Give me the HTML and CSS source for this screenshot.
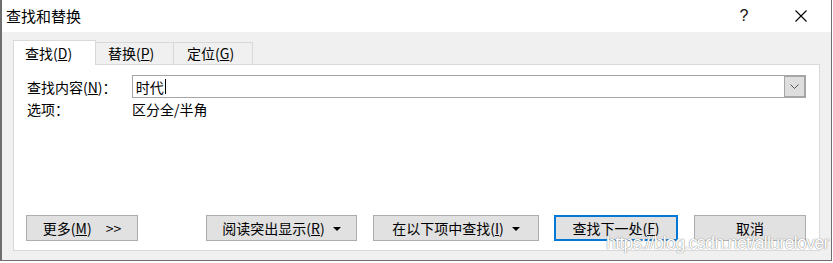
FILE: index.html
```html
<!DOCTYPE html>
<html lang="zh-CN">
<head>
    <meta charset="UTF-8">
    <title>查找和替换</title>
    <link rel="stylesheet" href="styles.css">
</head>
<body>
    <div class="dialog">
        <div class="titlebar">
            <span class="title">查找和替换</span>
            <div class="controls">
                <span class="ctl help">?</span>
                <span class="ctl close">
                    <svg width="12" height="12" viewBox="0 0 12 12"><path d="M0.5 0.5 L11.5 11.5 M11.5 0.5 L0.5 11.5" stroke="#000" stroke-width="1.1" fill="none"/></svg>
                </span>
            </div>
        </div>

        <div class="body">
            <div class="tabs">
                <div class="tab active">查找(<u>D</u>)</div>
                <div class="tab">替换(<u>P</u>)</div>
                <div class="tab last">定位(<u>G</u>)</div>
            </div>

            <div class="panel">
                <div class="row">
                    <span class="label">查找内容(<u>N</u>)：</span>
                    <div class="combo">
                        <span class="value">时代</span><span class="caret"></span>
                        <span class="drop">
                            <svg width="9" height="5" viewBox="0 0 9 5"><path d="M0.5 0.5 L4.5 4.5 L8.5 0.5" stroke="#555" stroke-width="1" fill="none"/></svg>
                        </span>
                    </div>
                </div>
                <div class="row options">
                    <span class="label">选项：</span>
                    <span>区分全/半角</span>
                </div>

                <div class="buttons">
                    <button type="button" class="btn more"><span>更多(<u>M</u>)</span><span>&gt;&gt;</span></button>
                    <button type="button" class="btn read"><span>阅读突出显示(<u>R</u>)</span><svg class="arrow" width="8" height="4" viewBox="0 0 8 4"><path d="M0 0 H8 L4 4 Z" fill="#000"/></svg></button>
                    <button type="button" class="btn within"><span>在以下项中查找(<u>I</u>)</span><svg class="arrow" width="8" height="4" viewBox="0 0 8 4"><path d="M0 0 H8 L4 4 Z" fill="#000"/></svg></button>
                    <button type="button" class="btn next"><span>查找下一处(<u>F</u>)</span></button>
                    <button type="button" class="btn cancel"><span>取消</span></button>
                </div>
            </div>
        </div>

        <div class="watermark">https://blog.csdn.net/allurelover</div>
    </div>
</body>
</html>
```

FILE: styles.css
```css
* {
    box-sizing: border-box;
    font-family: "Noto Sans CJK SC", "Liberation Sans", sans-serif;
}

body {
    margin: 0;
    background-color: white;
    color: black;
    font-size: 14px;
}

.dialog {
    position: relative;
    width: 832px;
    height: 261px;
    border: 1px solid #6e6e6e;
    border-top: 0;
    border-left-width: 2px;
    display: flex;
    flex-direction: column;
}

.titlebar {
    height: 32px;
    display: flex;
    align-items: center;
    padding: 0 7px 0 4px;
    background-color: white;
}

.title {
    font-size: 15px;
    line-height: 20px;
}

.controls {
    margin-left: auto;
    display: flex;
    gap: 11px;
}

.ctl {
    width: 46px;
    height: 32px;
    display: flex;
    align-items: center;
    justify-content: center;
}

.help {
    font-family: "Liberation Sans", sans-serif;
    font-size: 16px;
    color: #111;
}

.body {
    flex: 1;
    background-color: #f0f0f0;
    padding: 8px 11px 9px 11px;
    display: flex;
    flex-direction: column;
}

.tabs {
    display: flex;
    height: 24px;
    align-items: flex-end;
}

.tab {
    height: 22px;
    line-height: 21px;
    border: 1px solid #d9d9d9;
    border-bottom: 0;
    border-left: 0;
    background-color: #f0f0f0;
    padding-left: 12px;
}

.tab.active {
    position: relative;
    z-index: 1;
    height: 25px;
    margin-bottom: -1px;
    width: 83px;
    line-height: 24px;
    background-color: white;
    border-left: 1px solid #d9d9d9;
    padding-left: 11px;
}

.tab:nth-child(2) {
    width: 78px;
}

.tab.last {
    width: 79px;
    padding-left: 13px;
}

.panel {
    flex: 1;
    background-color: white;
    border: 1px solid #d9d9d9;
    padding: 10px 13px 9px 13px;
    display: flex;
    flex-direction: column;
}

.row {
    display: flex;
    align-items: center;
}

.label {
    width: 105px;
    line-height: 20px;
}

.combo {
    width: 676px;
    height: 23px;
    border: 1px solid #a6a6a6;
    display: flex;
    align-items: center;
    padding-left: 3px;
}

.value {
    line-height: 20px;
}

.caret {
    width: 1px;
    height: 15px;
    background-color: black;
    margin-left: 1px;
}

.drop {
    margin-left: auto;
    width: 21px;
    height: 21px;
    border: 1px solid #a6a6a6;
    background-color: #dedede;
    display: flex;
    align-items: center;
    justify-content: center;
}

.options {
    height: 21px;
}

.options span {
    line-height: 20px;
}

.buttons {
    margin-top: auto;
    margin-left: -1px;
    display: flex;
}

.btn {
    height: 26px;
    padding: 0;
    font-size: 14px;
    line-height: 20px;
    color: black;
    background-color: #e1e1e1;
    border: 1px solid #adadad;
    display: flex;
    align-items: center;
    justify-content: center;
    gap: 8px;
}

.btn.more {
    width: 112px;
    gap: 14px;
}

.btn.read {
    width: 151px;
    margin-left: 68px;
}

.btn.within {
    width: 166px;
    margin-left: 16px;
}

.btn.next {
    width: 124px;
    margin-left: 15px;
    border: 2px solid #0078d7;
}

.btn.cancel {
    width: 112px;
    margin-left: 16px;
}

.arrow {
    margin-top: 1px;
}

.watermark {
    position: absolute;
    left: 604px;
    top: 233px;
    font-family: "Liberation Sans", sans-serif;
    font-size: 18px;
    letter-spacing: -0.8px;
    line-height: 20px;
    color: white;
    text-shadow: 0 0 1px #8a8a8a, 0 0 1px #8a8a8a;
}
```
